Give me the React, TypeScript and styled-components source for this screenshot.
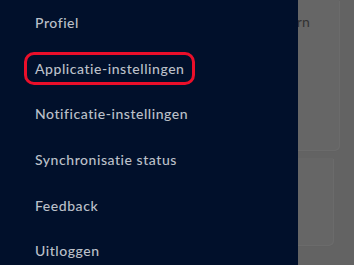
import React from "react";
import styled, { createGlobalStyle } from "styled-components";

const Global = createGlobalStyle`
  html, body { margin: 0; padding: 0; }
  body { width: 354px; height: 265px; overflow: hidden; font-family: Lato, "Noto Sans", sans-serif; }
`;

const Screen = styled.div`
  position: relative;
  width: 354px;
  height: 265px;
  overflow: hidden;
  background: #636363;
`;

const Page = styled.div`
  display: flex;
  flex-direction: column;
  gap: 8px;
  padding: 0 15px 0 0;
  height: 100%;
  box-sizing: border-box;
`;

const Card = styled.div<{ $right: number; $height: number }>`
  flex-shrink: 0;
  margin-right: ${(p) => p.$right}px;
  height: ${(p) => p.$height}px;
  background: #666666;
  border-radius: 0 0 5px 5px;
  box-shadow: 1px 1px 0 #6b6b6b, 0 1px 1px #5f5f5f;
  box-sizing: border-box;
`;

const TopCard = styled(Card)`
  display: flex;
  justify-content: flex-end;
  padding: 13px 29px 0 0;
`;

const Heading = styled.div`
  font-size: 14px;
  color: #333333;
  letter-spacing: 0.2px;
`;

const Drawer = styled.nav`
  position: absolute;
  left: 0;
  top: 0;
  bottom: 0;
  width: 298px;
  background: #01102b;
  display: flex;
  flex-direction: column;
  padding: 6px 0 0 24px;
  box-sizing: border-box;
`;

const Item = styled.div<{ $active?: boolean }>`
  flex-shrink: 0;
  display: flex;
  align-items: center;
  align-self: flex-start;
  height: 33px;
  margin-bottom: 12.7px;
  padding: 0 7px 0 8px;
  border: 3px solid ${(p) => (p.$active ? "#ea0f2a" : "transparent")};
  border-radius: 10px;
  font-size: 14px;
  font-weight: 500;
  letter-spacing: 0.55px;
  color: #bcc0c9;
  box-sizing: border-box;
`;

const items = [
  "Profiel",
  "Applicatie-instellingen",
  "Notificatie-instellingen",
  "Synchronisatie status",
  "Feedback",
  "Uitloggen",
];

export default function App() {
  return (
    <Screen>
      <Global />
      <Page>
        <TopCard $right={0} $height={150}>
          <Heading>Lesmateriaal voor Kern</Heading>
        </TopCard>
        <Card $right={6} $height={87} />
      </Page>
      <Drawer>
        {items.map((t, i) => (
          <Item key={t} $active={i === 1}>
            {t}
          </Item>
        ))}
      </Drawer>
    </Screen>
  );
}
